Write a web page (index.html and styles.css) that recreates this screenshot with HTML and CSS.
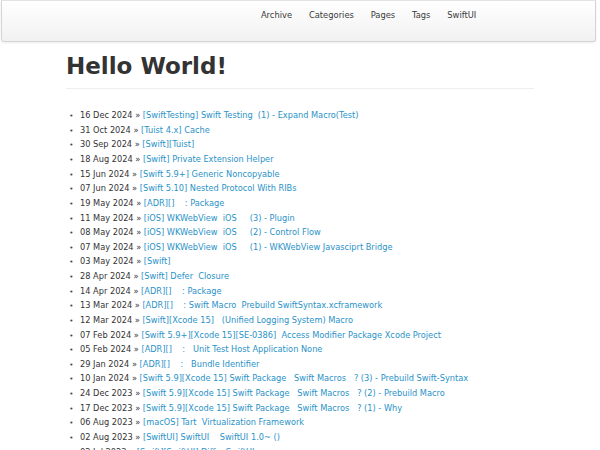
FILE: index.html
```html
<!DOCTYPE html>
<html>
<head>
<meta charset="utf-8">
<link rel="stylesheet" href="styles.css">
</head>
<body>
<div class="navbar">
  <div class="container nav-inner">
    <ul class="nav">
      <li><a href="#">Archive</a></li>
      <li><a href="#">Categories</a></li>
      <li><a href="#">Pages</a></li>
      <li><a href="#">Tags</a></li>
      <li><a href="#">SwiftUI</a></li>
    </ul>
  </div>
</div>
<div class="container">
  <div class="page-header"><h1>Hello World!</h1></div>
  <ul class="posts">
    <li><span>16 Dec 2024</span> &raquo; <a href="#">[SwiftTesting] Swift Testing &nbsp;(1) - Expand Macro(Test)</a></li>
    <li><span>31 Oct 2024</span> &raquo; <a href="#">[Tuist 4.x] Cache</a></li>
    <li><span>30 Sep 2024</span> &raquo; <a href="#">[Swift][Tuist]</a></li>
    <li><span>18 Aug 2024</span> &raquo; <a href="#">[Swift] Private Extension Helper</a></li>
    <li><span>15 Jun 2024</span> &raquo; <a href="#">[Swift 5.9+] Generic Noncopyable</a></li>
    <li><span>07 Jun 2024</span> &raquo; <a href="#">[Swift 5.10] Nested Protocol With RIBs</a></li>
    <li><span>19 May 2024</span> &raquo; <a href="#">[ADR][] &nbsp;&nbsp; : Package</a></li>
    <li><span>11 May 2024</span> &raquo; <a href="#">[iOS] WKWebView &nbsp;iOS &nbsp;&nbsp;&nbsp; (3) - Plugin</a></li>
    <li><span>08 May 2024</span> &raquo; <a href="#">[iOS] WKWebView &nbsp;iOS &nbsp;&nbsp;&nbsp; (2) - Control Flow</a></li>
    <li><span>07 May 2024</span> &raquo; <a href="#">[iOS] WKWebView &nbsp;iOS &nbsp;&nbsp;&nbsp; (1) - WKWebView Javasciprt Bridge</a></li>
    <li><span>03 May 2024</span> &raquo; <a href="#">[Swift]</a></li>
    <li><span>28 Apr 2024</span> &raquo; <a href="#">[Swift] Defer &nbsp;Closure</a></li>
    <li><span>14 Apr 2024</span> &raquo; <a href="#">[ADR][] &nbsp;&nbsp; : Package</a></li>
    <li><span>13 Mar 2024</span> &raquo; <a href="#">[ADR][] &nbsp;&nbsp; : Swift Macro &nbsp;Prebuild SwiftSyntax.xcframework</a></li>
    <li><span>12 Mar 2024</span> &raquo; <a href="#">[Swift][Xcode 15] &nbsp; (Unified Logging System) Macro</a></li>
    <li><span>07 Feb 2024</span> &raquo; <a href="#">[Swift 5.9+][Xcode 15][SE-0386] &nbsp;Access Modifier Package Xcode Project</a></li>
    <li><span>05 Feb 2024</span> &raquo; <a href="#">[ADR][] &nbsp;&nbsp; : &nbsp; Unit Test Host Application None</a></li>
    <li><span>29 Jan 2024</span> &raquo; <a href="#">[ADR][] &nbsp;&nbsp; : &nbsp; Bundle Identifier</a></li>
    <li><span>10 Jan 2024</span> &raquo; <a href="#">[Swift 5.9][Xcode 15] Swift Package &nbsp; Swift Macros &nbsp; ? (3) - Prebuild Swift-Syntax</a></li>
    <li><span>24 Dec 2023</span> &raquo; <a href="#">[Swift 5.9][Xcode 15] Swift Package &nbsp; Swift Macros &nbsp; ? (2) - Prebuild Macro</a></li>
    <li><span>17 Dec 2023</span> &raquo; <a href="#">[Swift 5.9][Xcode 15] Swift Package &nbsp; Swift Macros &nbsp; ? (1) - Why</a></li>
    <li><span>06 Aug 2023</span> &raquo; <a href="#">[macOS] Tart &nbsp;Virtualization Framework</a></li>
    <li><span>02 Aug 2023</span> &raquo; <a href="#">[SwiftUI] SwiftUI &nbsp;&nbsp; SwiftUI 1.0~ ()</a></li>
    <li><span>02 Jul 2023</span> &raquo; <a href="#">[Swift][SwiftUI] Diff &nbsp;&nbsp; SwiftUI</a></li>
  </ul>
</div>
</body>
</html>
```

FILE: styles.css
```css
html, body {
  margin: 0;
  padding: 0;
  background: #fff;
}
body {
  font-family: "DejaVu Sans", sans-serif;
  font-size: 8.22px;
  line-height: 14.63px;
  color: #333;
}
.container {
  width: 468px;
  margin: 0 auto;
}
.navbar {
  margin: 0 4px 0 1px;
  height: 40px;
  border: 1px solid #d4d4d4;
  border-top-color: #e3e3e3;
  border-radius: 0 0 3px 3px;
  background: linear-gradient(to bottom, #ffffff, #f1f1f1);
  box-shadow: 0 1px 3px rgba(0,0,0,0.08);
}
.nav {
  list-style: none;
  margin: 0;
  padding: 0 0 0 188px;
  display: flex;
}
.nav li a {
  display: block;
  padding: 7.3px 8.4px;
  line-height: 14.6px;
  font-size: 8.35px;
  color: #3a3a3a;
  text-decoration: none;
}
.page-header {
  margin-top: 10px;
  padding-bottom: 7px;
  border-bottom: 1px solid #eee;
}
.page-header h1 {
  margin: 0;
  font-size: 23px;
  line-height: 29.2px;
  font-weight: bold;
  color: #333;
}
.posts {
  margin: 19px 0 0 0;
  padding-left: 14px;
}
.posts li::marker {
  content: "\2022\00a0\00a0\00a0";
  font-size: 7px;
  color: #444;
}
.posts a {
  color: #2a92c8;
  text-decoration: none;
}
```
